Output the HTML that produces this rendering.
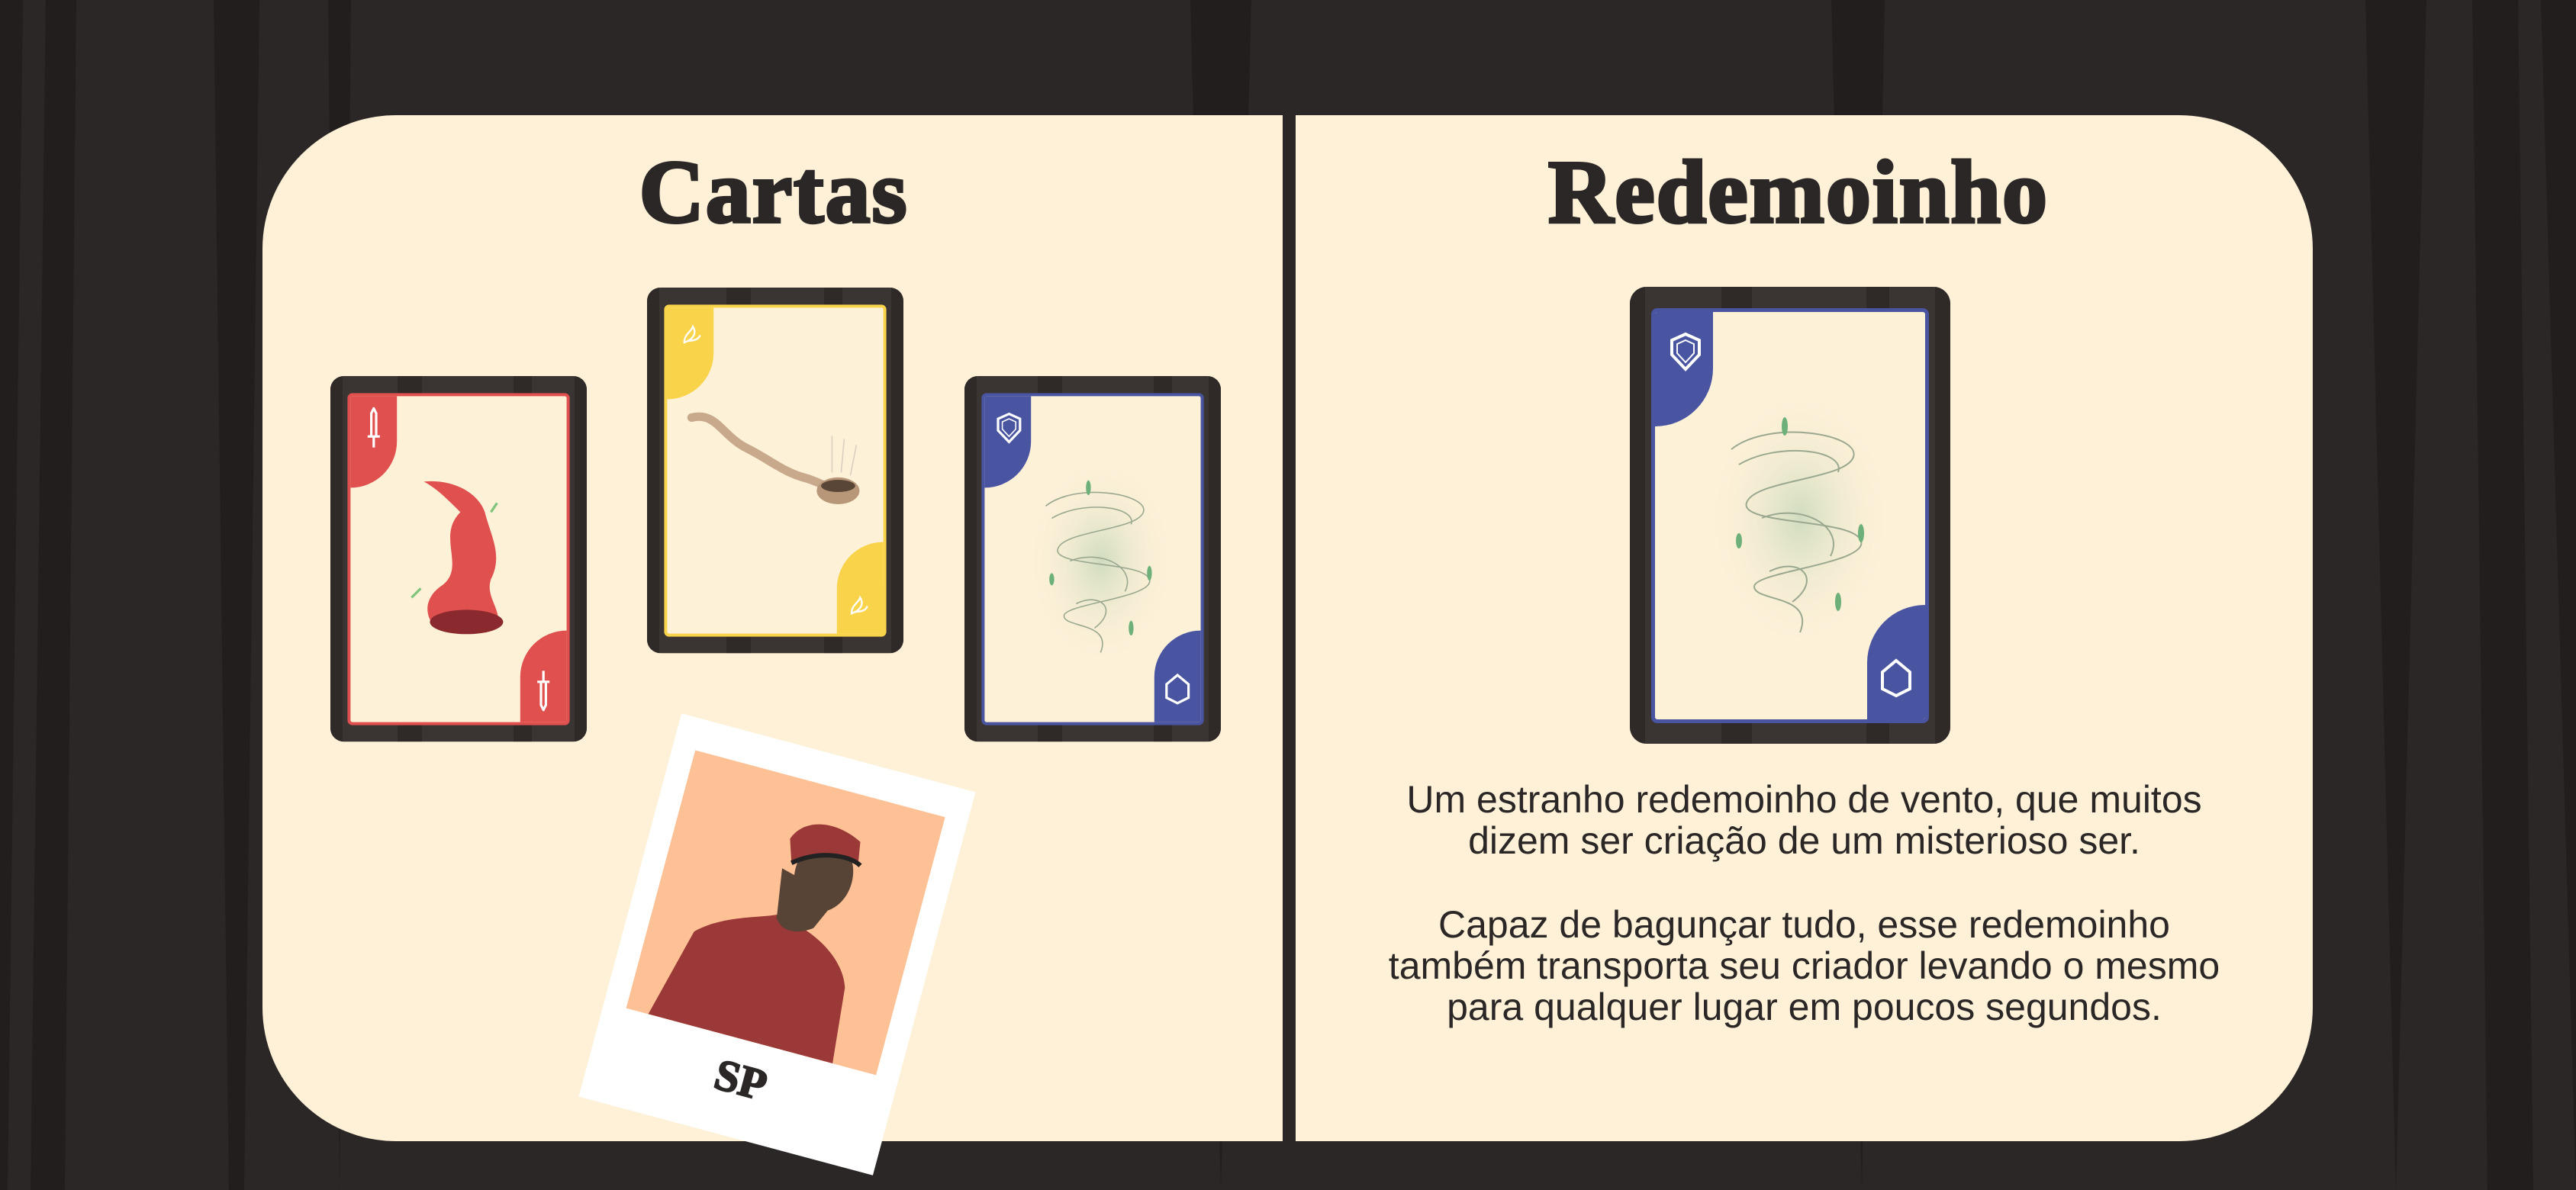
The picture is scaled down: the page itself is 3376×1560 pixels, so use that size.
<!DOCTYPE html>
<html><head><meta charset="utf-8"><style>
*{margin:0;padding:0;box-sizing:border-box}
body{width:3376px;height:1560px;background:#2b2727;position:relative;overflow:hidden;font-family:"Liberation Sans",sans-serif}
.bg{position:absolute;left:0;top:0}
.panel{position:absolute;left:344px;top:151px;width:2687px;height:1345px;background:#fef1d7;border-radius:175px}
.div{position:absolute;left:1681px;top:151px;width:17px;height:1345px;background:#2b2727}
.title{position:absolute;font-family:"Liberation Serif",serif;font-weight:bold;font-size:118px;color:#2b2727;text-align:center;transform:translateX(-50%);top:184px;letter-spacing:2px;-webkit-text-stroke:4px #2b2727;white-space:nowrap}
.card{position:absolute;width:420px;height:599px;border-radius:22px;background:#3a3432;overflow:hidden;transform-origin:0 0}
.card .st{position:absolute;top:0;bottom:0;background:#2f2a28}
.inner{position:absolute;left:28px;top:28px;width:364px;height:544px;border:5px solid var(--c);border-radius:8px;background:#fdf1d8;overflow:hidden}
.tl{position:absolute;left:0;top:0;width:76px;height:150px;background:var(--c);border-bottom-right-radius:76px}
.br{position:absolute;right:0;bottom:0;width:76px;height:150px;background:var(--c);border-top-left-radius:76px}
.ic{position:absolute}
.txt{position:absolute;left:1698px;width:1333px;text-align:center;font-size:50px;line-height:54px;color:#2b2727}
.pol{position:absolute;left:819px;top:978px;width:399px;height:520px;background:#fff;transform:rotate(15deg)}
.photo{position:absolute;left:30px;top:42px;width:339px;height:350px;background:#fec196;overflow:hidden}
.sp{position:absolute;left:0;right:0;top:410px;text-align:center;font-family:"Liberation Serif",serif;font-weight:bold;font-size:58px;color:#2b2727;-webkit-text-stroke:2px #2b2727}
</style></head><body>
<svg class="bg" width="3376" height="1560">
<g fill="#221e1e">
<polygon points="60,0 100,0 85,1560 40,1560"/>
<polygon points="280,0 340,0 320,1560 300,1560"/>
<polygon points="430,0 460,0 445,1560"/>
<polygon points="1560,0 1640,0 1600,1560"/>
<polygon points="2400,0 2470,0 2440,1560"/>
<polygon points="3100,0 3180,0 3140,1560"/>
<polygon points="3240,0 3300,0 3320,1560 3260,1560"/>
<polygon points="3330,0 3376,0 3376,1560"/>
<polygon points="0,0 30,0 10,1560 0,1560"/>
</g>
</svg>
<div class="panel"></div>
<div class="div"></div>
<div class="title" style="left:1014px">Cartas</div>
<div class="title" style="left:2357px">Redemoinho</div>

<div class="card" style="left:433px;top:493px;transform:scale(.8);--c:#e0504f">
<div class="st" style="left:0;width:20px"></div><div class="st" style="left:110px;width:40px"></div><div class="st" style="left:300px;width:30px"></div><div class="st" style="left:400px;width:20px"></div>
<div class="inner"><div class="tl"></div><div class="br"></div>
<svg class="ic" style="left:22px;top:18px" width="32" height="70"><path d="M16 2 L20 10 L20 48 L12 48 L12 10 Z M6 48 H26 M16 50 V66" stroke="#fff" stroke-width="4" fill="none"/></svg>
<svg class="ic" style="right:22px;bottom:18px" width="32" height="70"><path d="M16 68 L20 60 L20 22 L12 22 L12 60 Z M6 22 H26 M16 20 V4" stroke="#fff" stroke-width="4" fill="none"/></svg>
<svg class="ic" style="left:80px;top:130px" width="220" height="260"><path d="M40 10 C90 5 130 30 140 60 C150 100 170 130 150 170 C140 200 170 220 160 250 L60 250 C40 230 40 200 70 180 C110 150 60 100 100 60 C80 40 60 20 40 10Z" fill="#e0504f"/><ellipse cx="110" cy="240" rx="60" ry="20" fill="#8a2a2e"/><path d="M20 200 l15 -15 M150 60 l10 -15" stroke="#7ec47a" stroke-width="4"/></svg>
</div></div>

<div class="card" style="left:848px;top:377px;transform:scale(.8);--c:#f9d44a">
<div class="st" style="left:0;width:20px"></div><div class="st" style="left:130px;width:40px"></div><div class="st" style="left:290px;width:30px"></div><div class="st" style="left:400px;width:20px"></div>
<div class="inner"><div class="tl"></div><div class="br"></div>
<svg class="ic" style="left:20px;top:25px" width="40" height="40"><path d="M8 32 C8 18 20 14 22 6 C30 18 20 28 8 32Z M12 30 C20 28 30 30 34 20" stroke="#fff" stroke-width="3" fill="none"/></svg>
<svg class="ic" style="right:20px;bottom:25px" width="40" height="40"><path d="M8 32 C8 18 20 14 22 6 C30 18 20 28 8 32Z M12 30 C20 28 30 30 34 20" stroke="#fff" stroke-width="3" fill="none"/></svg>
<svg class="ic" style="left:30px;top:150px" width="300" height="200"><path d="M10 30 C50 20 60 60 100 80 C140 100 160 120 200 130 C230 140 240 150 250 150" stroke="#c8a98c" stroke-width="14" fill="none" stroke-linecap="round"/><ellipse cx="250" cy="150" rx="35" ry="22" fill="#b89778"/><ellipse cx="250" cy="142" rx="28" ry="10" fill="#5a4636"/><path d="M240 120 l0 -60 M255 120 l5 -55 M270 125 l10 -50" stroke="#d8cfc0" stroke-width="2"/></svg>
</div></div>

<div class="card" style="left:1264px;top:493px;transform:scale(.8);--c:#4a55a2">
<div class="st" style="left:0;width:20px"></div><div class="st" style="left:120px;width:40px"></div><div class="st" style="left:310px;width:30px"></div><div class="st" style="left:400px;width:20px"></div>
<div class="inner"><div class="tl"></div><div class="br"></div>
<svg class="ic" style="left:18px;top:26px" width="44" height="52"><path d="M22 3 L40 11 V30 L22 49 L4 30 V11Z" stroke="#fff" stroke-width="4" fill="none"/><path d="M22 11 L33 16 V28 L22 40 L11 28 V16Z" fill="none" stroke="#fff" stroke-width="2"/></svg>
<svg class="ic" style="right:16px;bottom:28px" width="44" height="52"><path d="M22 3 L40 18 V40 L22 49 L4 40 V18Z" stroke="#fff" stroke-width="4" fill="none"/></svg>
<svg class="ic" style="left:70px;top:120px" width="240" height="330"><defs><radialGradient id="g"><stop offset="0" stop-color="#cfdcbf"/><stop offset="1" stop-color="#fdf1d8" stop-opacity="0"/></radialGradient></defs><ellipse cx="120" cy="150" rx="120" ry="170" fill="url(#g)"/><g stroke="#9aa890" stroke-width="2" fill="none"><path d="M30 60 C80 20 200 40 190 70 C180 100 60 100 50 130 C40 160 190 150 200 180 C210 210 60 220 60 240 C60 260 140 250 120 300"/><path d="M40 80 C90 50 180 60 170 90 M70 150 C120 130 180 160 160 200 M80 220 C120 200 150 230 110 260"/></g><g fill="#6db07a"><ellipse cx="100" cy="30" rx="4" ry="12"/><ellipse cx="200" cy="170" rx="4" ry="12"/><ellipse cx="40" cy="180" rx="4" ry="10"/><ellipse cx="170" cy="260" rx="4" ry="12"/></g></svg>
</div></div>

<div class="card" style="left:2136px;top:376px;--c:#4a55a2">
<div class="st" style="left:0;width:20px"></div><div class="st" style="left:120px;width:40px"></div><div class="st" style="left:310px;width:30px"></div><div class="st" style="left:400px;width:20px"></div>
<div class="inner"><div class="tl"></div><div class="br"></div>
<svg class="ic" style="left:18px;top:26px" width="44" height="52"><path d="M22 3 L40 11 V30 L22 49 L4 30 V11Z" stroke="#fff" stroke-width="4" fill="none"/><path d="M22 11 L33 16 V28 L22 40 L11 28 V16Z" fill="none" stroke="#fff" stroke-width="2"/></svg>
<svg class="ic" style="right:16px;bottom:28px" width="44" height="52"><path d="M22 3 L40 18 V40 L22 49 L4 40 V18Z" stroke="#fff" stroke-width="4" fill="none"/></svg>
<svg class="ic" style="left:70px;top:120px" width="240" height="330"><defs><radialGradient id="g2"><stop offset="0" stop-color="#cfdcbf"/><stop offset="1" stop-color="#fdf1d8" stop-opacity="0"/></radialGradient></defs><ellipse cx="120" cy="150" rx="120" ry="170" fill="url(#g2)"/><g stroke="#9aa890" stroke-width="2" fill="none"><path d="M30 60 C80 20 200 40 190 70 C180 100 60 100 50 130 C40 160 190 150 200 180 C210 210 60 220 60 240 C60 260 140 250 120 300"/><path d="M40 80 C90 50 180 60 170 90 M70 150 C120 130 180 160 160 200 M80 220 C120 200 150 230 110 260"/></g><g fill="#6db07a"><ellipse cx="100" cy="30" rx="4" ry="12"/><ellipse cx="200" cy="170" rx="4" ry="12"/><ellipse cx="40" cy="180" rx="4" ry="10"/><ellipse cx="170" cy="260" rx="4" ry="12"/></g></svg>
</div></div>

<div class="pol"><div class="photo">
<svg width="339" height="350"><path d="M30 350 L60 230 C90 200 140 190 160 180 L200 190 C230 200 260 220 270 250 L280 350Z" fill="#9b3838"/><path d="M150 120 L160 185 C170 200 190 200 210 185 L230 140 Z" fill="#574436"/><ellipse cx="205" cy="115" rx="38" ry="48" fill="#574436"/><path d="M150 80 C160 50 200 40 240 60 L245 90 C220 80 180 90 160 110Z" fill="#9b3838"/><path d="M160 110 C190 85 230 80 248 90" stroke="#222" stroke-width="6" fill="none"/></svg>
</div><div class="sp">SP</div></div>

<div class="txt" style="top:1021px">Um estranho redemoinho de vento, que muitos<br>dizem ser criação de um misterioso ser.</div>
<div class="txt" style="top:1185px">Capaz de bagunçar tudo, esse redemoinho<br>também transporta seu criador levando o mesmo<br>para qualquer lugar em poucos segundos.</div>
</body></html>
